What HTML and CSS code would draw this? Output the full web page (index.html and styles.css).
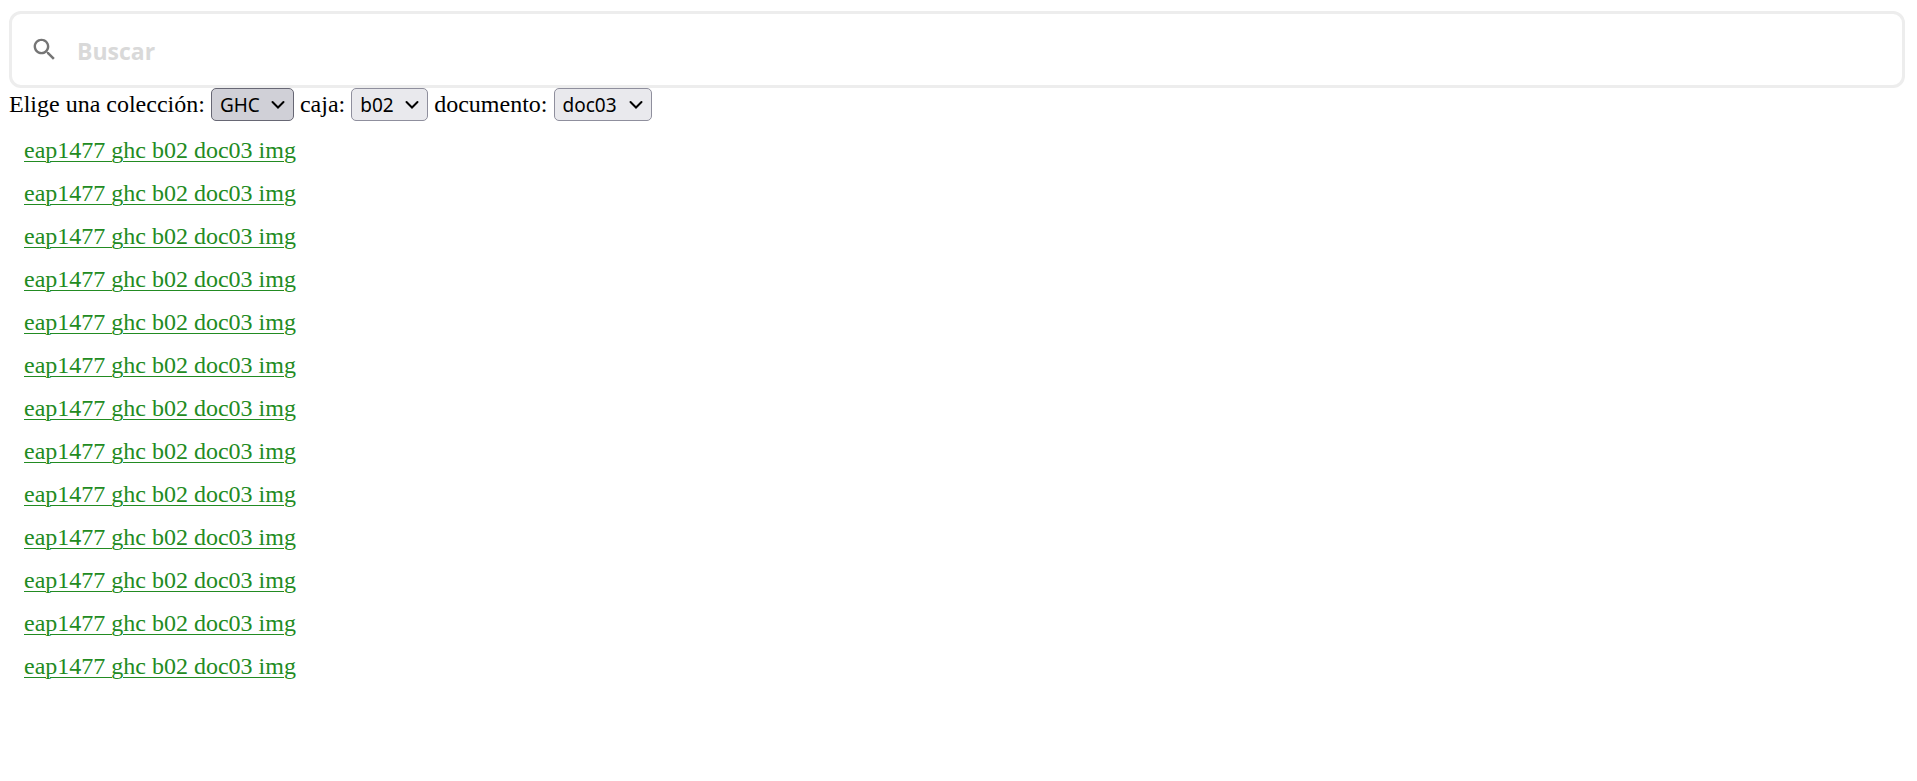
FILE: index.html
```
<!DOCTYPE html>
<html lang="es">
<head>
  <meta charset="utf-8">
  <title>Buscar</title>
  <link rel="stylesheet" href="styles.css">
</head>
<body>
  <form class="search">
    <svg class="search-icon" viewBox="0 0 24 24" aria-hidden="true">
      <path d="M15.5 14h-.79l-.28-.27C15.41 12.59 16 11.11 16 9.5 16 5.91 13.09 3 9.5 3S3 5.91 3 9.5 5.91 16 9.5 16c1.61 0 3.09-.59 4.23-1.57l.27.28v.79l5 4.99L20.49 19l-4.99-5zm-6 0C7.01 14 5 11.99 5 9.5S7.01 5 9.5 5 14 7.01 14 9.5 11.99 14 9.5 14z"/>
    </svg>
    <input class="search-input" type="text" placeholder="Buscar" aria-label="Buscar">
  </form>

  <div class="filters">
    <label for="coleccion">Elige una colección:</label>
    <select id="coleccion" class="filter active">
      <option>GHC</option>
    </select>
    <label for="caja">caja:</label>
    <select id="caja" class="filter">
      <option>b02</option>
    </select>
    <label for="documento">documento:</label>
    <select id="documento" class="filter">
      <option>doc03</option>
    </select>
  </div>

  <div class="results">
    <a href="#">eap1477 ghc b02 doc03 img</a>
    <a href="#">eap1477 ghc b02 doc03 img</a>
    <a href="#">eap1477 ghc b02 doc03 img</a>
    <a href="#">eap1477 ghc b02 doc03 img</a>
    <a href="#">eap1477 ghc b02 doc03 img</a>
    <a href="#">eap1477 ghc b02 doc03 img</a>
    <a href="#">eap1477 ghc b02 doc03 img</a>
    <a href="#">eap1477 ghc b02 doc03 img</a>
    <a href="#">eap1477 ghc b02 doc03 img</a>
    <a href="#">eap1477 ghc b02 doc03 img</a>
    <a href="#">eap1477 ghc b02 doc03 img</a>
    <a href="#">eap1477 ghc b02 doc03 img</a>
    <a href="#">eap1477 ghc b02 doc03 img</a>
  </div>
</body>
</html>
```
FILE: styles.css
```
* {
  box-sizing: border-box;
}

body {
  margin: 11px 12px 11px 9px;
  font-family: "Liberation Serif", "Times New Roman", serif;
  font-size: 24px;
  color: black;
  background-color: white;
}

.search {
  display: flex;
  align-items: center;
  gap: 18px;
  padding: 16px 18px;
  border: 3px solid #ededed;
  border-radius: 12px;
}

.search-icon {
  width: 29px;
  height: 29px;
  fill: #757575;
}

.search-input {
  flex: 1;
  height: 39px;
  padding: 2px 0 0;
  border: none;
  outline: none;
  background: none;
  font-family: "Open Sans", sans-serif;
  font-size: 23px;
  font-weight: bold;
}

.search-input::placeholder {
  color: #d9d9d9;
  opacity: 1;
}

.filters {
  display: flex;
  align-items: center;
  gap: 6px;
}

.filter {
  appearance: none;
  height: 33px;
  padding: 0 33px 0 8px;
  border: 1px solid #8f8f9d;
  border-radius: 5px;
  background: #e9e9ed url("data:image/svg+xml,%3Csvg xmlns='http://www.w3.org/2000/svg' width='14' height='10'%3E%3Cpath d='M1.500 2l5.500 5.500L12.500 2' fill='none' stroke='black' stroke-width='2' stroke-linecap='round'/%3E%3C/svg%3E") no-repeat right 8px center;
  font-family: "Noto Sans", sans-serif;
  font-size: 19px;
  color: black;
}

.filter.active {
  border-color: #676774;
  background-color: #d0d0d7;
}

.results {
  display: flex;
  flex-direction: column;
  align-items: flex-start;
  gap: 15px;
  padding: 15px;
}

.results a {
  line-height: 28px;
  color: #228b22;
  text-decoration-thickness: 1px;
  text-underline-offset: 3px;
}
```
